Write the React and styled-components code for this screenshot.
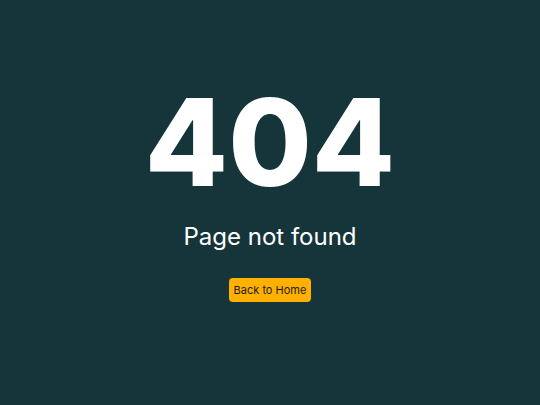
import React from "react";
import styled, { createGlobalStyle } from "styled-components";

const Global = createGlobalStyle`
  html, body { margin: 0; padding: 0; }
  body { background: #15353a; font-family: Inter, "Noto Sans", sans-serif; }
`;

const Page = styled.main`
  width: 540px;
  height: 405px;
  box-sizing: border-box;
  padding-top: 82px;
  display: flex;
  flex-direction: column;
  align-items: center;
  background: #15353a;
  color: #ffffff;
`;

const Code = styled.h1`
  margin: 0;
  font-size: 121px;
  font-weight: 800;
  line-height: 121px;
  letter-spacing: 0;
`;

const Message = styled.p`
  margin: 19px 0 0;
  font-size: 24px;
  font-weight: 400;
  line-height: 29px;
`;

const HomeButton = styled.button`
  margin-top: 27px;
  background: #ffb000;
  color: #1f1a10;
  border: none;
  border-radius: 4px;
  padding: 5px 5px;
  font-family: Inter, sans-serif;
  font-size: 11px;
  line-height: 14px;
  cursor: pointer;
`;

export default function App() {
  return (
    <>
      <Global />
      <Page>
        <Code>404</Code>
        <Message>Page not found</Message>
        <HomeButton>Back to Home</HomeButton>
      </Page>
    </>
  );
}
